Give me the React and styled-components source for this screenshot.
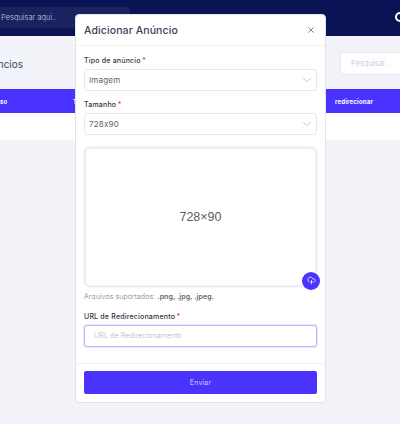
import styled, { createGlobalStyle } from "styled-components";
import { useState } from "react";
import { LuChevronDown, LuCloudUpload, LuX } from "react-icons/lu";

const GlobalStyle = createGlobalStyle`
	* {
		box-sizing: border-box;
	}

	html,
	body {
		margin: 0;
		padding: 0;
		height: 100%;
		overflow: hidden;
		background: #f2f2f9;
		font-family: "Inter", "Liberation Sans", sans-serif;
	}
`;

const Page = styled.div`
	position: relative;
	width: 400px;
	height: 424px;
	overflow: hidden;
	background: #f2f2f9;
`;

const Header = styled.header`
	display: flex;
	align-items: center;
	justify-content: space-between;
	height: 36px;
	background: #0a1354;
`;

const TopSearch = styled.div`
	display: flex;
	align-items: center;
	width: 130px;
	height: 21px;
	margin-top: -1px;
	padding-left: 1px;
	background: #1a2260;
	border-radius: 0 4px 4px 0;
	color: #c9cce2;
	font-size: 7.5px;
	font-weight: 300;
	white-space: nowrap;
`;

const UserDot = styled.div`
	flex: none;
	width: 10px;
	height: 10px;
	margin-right: -5px;
	margin-top: -3px;
	border: 2px solid #fff;
	border-radius: 50%;
`;

const TitleRow = styled.div`
	display: flex;
	align-items: center;
	justify-content: space-between;
	height: 53px;
	margin-left: -21px;
`;

const PageTitle = styled.h1`
	margin: 2px 0 0;
	color: #3d4a5c;
	font-size: 10px;
	font-weight: 400;
`;

const ListSearch = styled.div`
	display: flex;
	align-items: center;
	width: 60px;
	height: 23px;
	margin-top: 1px;
	padding-left: 10px;
	background: #fff;
	border: 1px solid #e8e8f0;
	border-right: none;
	border-radius: 4px 0 0 4px;
	color: #bcc0cb;
	font-size: 7.5px;
	font-weight: 300;
`;

const TableHead = styled.div`
	display: flex;
	align-items: center;
	height: 24px;
	background: #4a33ff;
	color: #fff;
	font-size: 6px;
	font-weight: 700;
	letter-spacing: 0.2px;
`;

const HeadCell = styled.div`
	flex: none;
	width: ${(props) => props.$width}px;
`;

const TableRow = styled.div`
	height: 27px;
	background: #fff;
`;

const Modal = styled.div`
	position: absolute;
	top: 14px;
	left: 75px;
	width: 251px;
	height: 389px;
	display: flex;
	flex-direction: column;
	background: #fff;
	border: 1px solid #e3e3ec;
	border-radius: 4px;
`;

const ModalHeader = styled.div`
	display: flex;
	align-items: center;
	justify-content: space-between;
	height: 31px;
	padding: 0 9px 0 8px;
	border-bottom: 1px solid #f0f0f5;
`;

const ModalTitle = styled.h2`
	margin: 0;
	color: #36435a;
	font-size: 10.5px;
	font-weight: 500;
	letter-spacing: 0.1px;
`;

const CloseButton = styled.button`
	display: flex;
	padding: 0;
	background: none;
	border: none;
	color: #6b7280;
	font-size: 10px;
`;

const ModalBody = styled.div`
	flex: 1;
	display: flex;
	flex-direction: column;
	padding: 8.5px 8px 0;
`;

const Label = styled.div`
	height: 11px;
	margin-bottom: 3px;
	color: #2f3640;
	font-size: 7px;
	font-weight: 500;
	letter-spacing: 0.2px;
	line-height: 11px;

	span {
		margin-left: 1.5px;
		color: #ef2f4f;
	}
`;

const Select = styled.div`
	display: flex;
	align-items: center;
	justify-content: space-between;
	height: 22px;
	margin-bottom: 8.5px;
	padding: 0 2px 0 4px;
	background: #fff;
	border: 1px solid #e8e8ef;
	border-radius: 3px;
	color: #5c6470;
	font-size: 8px;
	letter-spacing: 0.2px;

	svg {
		color: #b4b9c5;
		font-size: 14px;
		stroke-width: 1.4;
	}
`;

const Preview = styled.div`
	position: relative;
	display: flex;
	align-items: center;
	justify-content: center;
	height: 140px;
	margin-top: 3px;
	background: #fff;
	border: 2px solid #eeeef2;
	border-radius: 6px;
	box-shadow: 0 0 2px rgba(60, 60, 90, 0.12);
	color: #5e5e5e;
	font-family: "Liberation Sans", sans-serif;
	font-size: 12.5px;
`;

const UploadButton = styled.button`
	position: absolute;
	right: -5px;
	bottom: -5px;
	display: flex;
	align-items: center;
	justify-content: center;
	width: 18px;
	height: 18px;
	padding: 0;
	background: #4a33ff;
	border: none;
	border-radius: 50%;
	color: #fff;
	font-size: 9px;
`;

const HelpText = styled.p`
	height: 12px;
	margin: 4px 0 8px;
	color: #7b828e;
	font-size: 7px;
	font-weight: 300;
	letter-spacing: 0.1px;
	line-height: 12px;

	b {
		color: #5c6470;
		font-weight: 600;
	}
`;

const UrlInput = styled.input`
	width: 100%;
	height: 22px;
	padding: 0 9px;
	background: #fff;
	border: 1px solid #bdb5fb;
	border-radius: 3px;
	box-shadow: 0 0 0 1px #e9e6fe;
	color: #5c6470;
	font-family: inherit;
	font-size: 7.25px;
	font-weight: 300;
	outline: none;

	&::placeholder {
		color: #b4b8c4;
	}
`;

const ModalFooter = styled.div`
	display: flex;
	height: 39px;
	padding: 7px 8px 8px;
	border-top: 1px solid #f0f0f5;
`;

const SubmitButton = styled.button`
	flex: 1;
	height: 23px;
	background: #4a33ff;
	border: none;
	border-radius: 2px;
	color: #e6e3ff;
	font-family: inherit;
	font-size: 7px;
	font-weight: 300;
	letter-spacing: 0.2px;
`;

export default function App() {
	const [url, setUrl] = useState("");

	return (
		<Page>
			<GlobalStyle />
			<Header>
				<TopSearch>Pesquisar aqui..</TopSearch>
				<UserDot />
			</Header>
			<TitleRow>
				<PageTitle>Anúncios</PageTitle>
				<ListSearch>Pesquisar..</ListSearch>
			</TitleRow>
			<TableHead>
				<HeadCell $width={73}>so</HeadCell>
				<HeadCell $width={262}>T</HeadCell>
				<HeadCell $width={65}>redirecionar</HeadCell>
			</TableHead>
			<TableRow />

			<Modal>
				<ModalHeader>
					<ModalTitle>Adicionar Anúncio</ModalTitle>
					<CloseButton>
						<LuX />
					</CloseButton>
				</ModalHeader>
				<ModalBody>
					<Label>
						Tipo de anúncio<span>*</span>
					</Label>
					<Select>
						Imagem
						<LuChevronDown />
					</Select>
					<Label>
						Tamanho<span>*</span>
					</Label>
					<Select>
						728x90
						<LuChevronDown />
					</Select>
					<Preview>
						728×90
						<UploadButton>
							<LuCloudUpload />
						</UploadButton>
					</Preview>
					<HelpText>
						Arquivos suportados: <b>.png, .jpg, .jpeg.</b>
					</HelpText>
					<Label>
						URL de Redirecionamento<span>*</span>
					</Label>
					<UrlInput
						placeholder="URL de Redirecionamento"
						value={url}
						onChange={(e) => setUrl(e.target.value)}
					/>
				</ModalBody>
				<ModalFooter>
					<SubmitButton>Enviar</SubmitButton>
				</ModalFooter>
			</Modal>
		</Page>
	);
}
